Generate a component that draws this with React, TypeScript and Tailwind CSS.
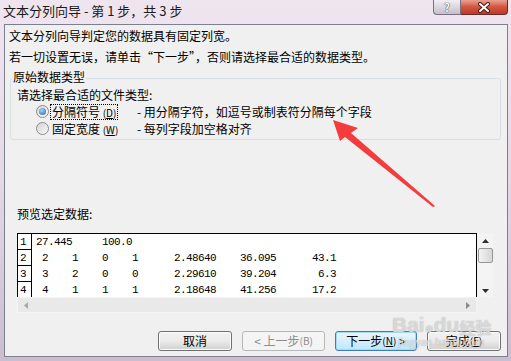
import React from 'react';

const UI = "font-['Noto_Sans_CJK_SC','Noto_Sans',sans-serif]";
const MONO = "font-['Liberation_Mono','Noto_Sans_CJK_SC',monospace]";

// place text pieces at fixed character columns
const line = (cells: [number, string][]) => {
  let s = '';
  for (const [col, text] of cells) {
    s = s.padEnd(col, ' ') + text;
  }
  return s;
};

const rows = [
  line([[0, '27.445'], [11, '100.0']]),
  line([[1, '2'], [6, '1'], [11, '0'], [16, '1'], [23, '2.48640'], [34, '36.095'], [46, '43.1']]),
  line([[1, '3'], [6, '2'], [11, '0'], [16, '0'], [23, '2.29610'], [34, '39.204'], [47, '6.3']]),
  line([[1, '4'], [6, '1'], [11, '1'], [16, '1'], [23, '2.18648'], [34, '41.256'], [46, '17.2']]),
];

const Radio = ({ checked }: { checked?: boolean }) => (
  <div className="w-[13px] h-[13px] rounded-full border border-[#8a8a8a] bg-linear-to-br from-[#d8d8d8] to-[#fdfdfd] flex items-center justify-center shrink-0">
    {checked ? (
      <div className="w-[7px] h-[7px] rounded-full bg-[radial-gradient(circle_at_40%_35%,#a6d6fa,#1f5ca6)]" />
    ) : (
      <div className="w-[9px] h-[9px] rounded-full bg-linear-to-br from-[#d6d6d6] to-[#f6f6f6]" />
    )}
  </div>
);

const Button = ({ children, w, kind }: { children: React.ReactNode; w: string; kind?: 'disabled' | 'default' }) => {
  const base = 'h-[20px] rounded-[3px] border flex items-center justify-center text-[12px] leading-none';
  const look =
    kind === 'disabled'
      ? 'border-[#b5b8ba] bg-[#f4f4f4] text-[#8c8c8c]'
      : kind === 'default'
      ? 'border-[#3c7fb1] bg-linear-to-b from-[#eaf6fd] to-[#bee6fd] text-black shadow-[inset_0_0_0_1px_#a7d9f5]'
      : 'border-[#707070] bg-linear-to-b from-[#f2f2f2] via-[#ebebeb] to-[#cfcfcf] text-black shadow-[inset_0_0_0_1px_#fcfcfc]';
  return <div className={`${base} ${look} ${w}`}>{children}</div>;
};

export default function App() {
  return (
    <div className={`relative w-[511px] h-[361px] overflow-hidden bg-linear-to-b from-[#efe5ef] via-[#e6d9e6] to-[#c9bdcf] ${UI}`}>
      {/* Title bar */}
      <div className="h-[24px] flex items-start justify-between">
        <div className="pl-[3px] pt-[2px] text-[13px] leading-[17px] text-[#1a1a1a]">文本分列向导 - 第 1 步，共 3 步</div>
        <div className="flex mr-[3px]">
          <div className="w-[28px] h-[15px] rounded-bl-[4px] border border-t-0 border-[#7a6f80] bg-linear-to-b from-[#f1eef3] to-[#c7bfcc] flex items-center justify-center text-[11px] font-bold leading-none text-white [text-shadow:0_0_1px_#333,0_0_1px_#333]">
            ?
          </div>
          <div className="w-[47px] h-[15px] rounded-br-[4px] border border-t-0 border-l-0 border-[#6b2b25] bg-linear-to-b from-[#e9a091] via-[#d0553f] to-[#c0372a] flex items-center justify-center">
            <svg width="14" height="11" viewBox="0 0 14 11">
              <path d="M3 2 L11 9 M11 2 L3 9" stroke="#4a1a15" strokeWidth="4" strokeLinecap="round" />
              <path d="M3 2 L11 9 M11 2 L3 9" stroke="#ffffff" strokeWidth="2" strokeLinecap="round" />
            </svg>
          </div>
        </div>
      </div>

      {/* Client area */}
      <div className="ml-[4px] mr-[3px] h-[333px] border border-[#7c7f8c] bg-[#f0f0f0] flex flex-col text-[12px] text-black">
        <div className="pl-[4px] leading-[21px]">
          <div>文本分列向导判定您的数据具有固定列宽。</div>
          <div>若一切设置无误，请单击“下一步”，否则请选择最合适的数据类型。</div>
        </div>

        <fieldset className="mt-[3px] ml-[5px] mr-[6px] border border-[#d5dfe5] rounded-[3px] pb-[2px]">
          <legend className="ml-[1px] px-[1px] leading-[14px] pb-[2px]">原始数据类型</legend>
          <div className="pl-[6px] leading-[17px]">请选择最合适的文件类型:</div>
          <div className="h-[17px] flex items-center pl-[25px]">
            <Radio checked />
            <div className="w-[88px] pl-[1px]">
              <span className="border border-dotted border-black px-[1px] leading-[13px] inline-block">
                分隔符号 <span className="text-[10px]">(<u>D</u>)</span>
              </span>
            </div>
            <span>- 用分隔字符，如逗号或制表符分隔每个字段</span>
          </div>
          <div className="h-[17px] flex items-center pl-[25px]">
            <Radio />
            <div className="w-[88px] pl-[3px]">
              固定宽度 <span className="text-[10px]">(<u>W</u>)</span>
            </div>
            <span>- 每列字段加空格对齐</span>
          </div>
        </fieldset>

        <div className="mt-[65px] pl-[12px] leading-[17px]">预览选定数据:</div>

        {/* Preview */}
        <div className="mt-[11px] ml-[12px] grid grid-cols-[460px_16px] grid-rows-[64px_16px]">
          <div className={`border-l border-t border-r border-black bg-white overflow-hidden ${MONO} text-[11px] tracking-[-0.6px]`}>
            {rows.map((r, i) => (
              <div key={i} className="flex h-[16px]">
                <div className="w-[14px] shrink-0 border-r border-b border-black pl-[2px] leading-[17px]">{i + 1}</div>
                <pre className={`pl-[4px] leading-[16px] ${MONO}`}>{r}</pre>
              </div>
            ))}
          </div>
          <div className="bg-[#f4f4f4] flex flex-col items-center pt-[6px] pb-[4px] ml-[1px]">
            <svg width="7" height="4" viewBox="0 0 7 4"><path d="M0 4 L3.5 0 L7 4 Z" fill="#2c2c2c" /></svg>
            <div className="mt-[5px] w-[15px] h-[15px] rounded-[2px] border border-[#979797] bg-linear-to-r from-[#f3f3f3] to-[#d6d6d6]" />
            <div className="flex-1" />
            <svg width="7" height="4" viewBox="0 0 7 4"><path d="M0 0 L3.5 4 L7 0 Z" fill="#2c2c2c" /></svg>
          </div>
          <div className="bg-[#e9e9e9] border border-[#f4f4f4] flex items-center justify-between px-[6px]">
            <svg width="4" height="7" viewBox="0 0 4 7"><path d="M4 0 L0 3.5 L4 7 Z" fill="#a8a8a8" /></svg>
            <svg width="4" height="7" viewBox="0 0 4 7"><path d="M0 0 L4 3.5 L0 7 Z" fill="#8a8a8a" /></svg>
          </div>
          <div />
        </div>

        {/* Buttons */}
        <div className="mt-[18px] flex justify-end gap-[10px] pr-[6px]">
          <Button w="w-[74px]">取消</Button>
          <Button w="w-[83px]" kind="disabled">
            &lt; 上一步<span className="text-[10px]">(B)</span>
          </Button>
          <Button w="w-[82px]" kind="default">
            下一步<span className="text-[10px]">(<u>N</u>)</span>&nbsp;&gt;
          </Button>
          <Button w="w-[74px]">
            完成<span className="text-[10px]">(<u>F</u>)</span>
          </Button>
        </div>
      </div>

      {/* Red annotation arrow */}
      <svg className="absolute inset-0 pointer-events-none" width="511" height="361" viewBox="0 0 511 361">
        <polygon points="333,120 358,128 351,133 435,206 433,207 345,137 340,141" fill="#f43c3c" />
      </svg>

      {/* watermark over the dialog */}
      <div className="absolute left-[392px] top-[314px] pointer-events-none text-white/60 [text-shadow:0_0_1px_#9a9a9a] leading-none">
        <div className="flex items-end text-[21px] font-bold font-['Liberation_Sans',sans-serif]">
          Bai<span className="text-[15px]">●</span>du<span className="text-[16px] font-['Noto_Sans_CJK_SC',sans-serif]">经验</span>
        </div>
        <div className="text-[10px] mt-[2px] pl-[6px]">jingyan.baidu.com</div>
      </div>
    </div>
  );
}
